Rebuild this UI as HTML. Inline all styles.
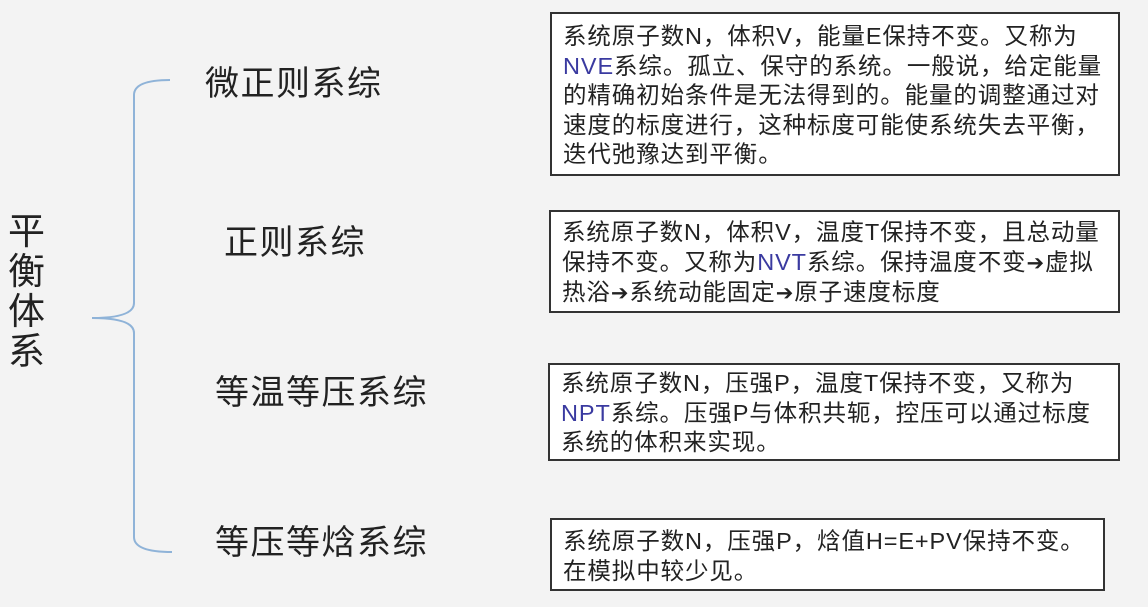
<!DOCTYPE html>
<html><head><meta charset="utf-8"><style>
body{margin:0;width:1148px;height:607px;background:#f3f3f3;position:relative;overflow:hidden;font-family:"Liberation Sans","Noto Sans CJK SC",sans-serif;color:#222}
.l{position:absolute;font-size:34px;white-space:nowrap;line-height:1;letter-spacing:1.5px}
.b{position:absolute;background:#fff;border:2px solid #333;box-sizing:border-box;font-size:23.5px;line-height:29.5px;padding:7px 0 0 11px;white-space:nowrap;letter-spacing:0.9px}
.n{color:#3a3aa0}
.a{font-family:"DejaVu Sans",sans-serif;font-size:21px}
.v{position:absolute;left:8px;top:212px;font-size:37px;line-height:40px;width:40px}
</style></head><body>
<div class="v">平<br>衡<br>体<br>系</div>
<svg style="position:absolute;left:0;top:0" width="300" height="607"><path d="M170 80 Q134 80 134 95 L134 303 Q134 318 92 318 Q134 318 134 333 L134 537 Q134 552 172 552" fill="none" stroke="#8fb3d8" stroke-width="2"/></svg>
<div class="l" style="left:205px;top:67px">微正则系综</div>
<div class="l" style="left:224px;top:226px">正则系综</div>
<div class="l" style="left:215px;top:376px">等温等压系综</div>
<div class="l" style="left:215px;top:526px">等压等焓系综</div>
<div class="b" style="left:550px;top:12px;width:570px;height:164px;padding-top:8px">系统原子数N，体积V，能量E保持不变。又称为<br><span class="n">NVE</span>系综。孤立、保守的系统。一般说，给定能量<br>的精确初始条件是无法得到的。能量的调整通过对<br>速度的标度进行，这种标度可能使系统失去平衡，<br>迭代弛豫达到平衡。</div>
<div class="b" style="left:549px;top:210px;width:571px;height:103px;padding-top:6px">系统原子数N，体积V，温度T保持不变，且总动量<br>保持不变。又称为<span class="n">NVT</span>系综。保持温度不变<span class="a">➔</span>虚拟<br>热浴<span class="a">➔</span>系统动能固定<span class="a">➔</span>原子速度标度</div>
<div class="b" style="left:548px;top:363px;width:572px;height:98px;padding-top:4px">系统原子数N，压强P，温度T保持不变，又称为<br><span class="n">NPT</span>系综。压强P与体积共轭，控压可以通过标度<br>系统的体积来实现。</div>
<div class="b" style="left:550px;top:518px;width:555px;height:73px;padding-top:7px">系统原子数N，压强P，焓值H=E+PV保持不变。<br>在模拟中较少见。</div>
</body></html>
